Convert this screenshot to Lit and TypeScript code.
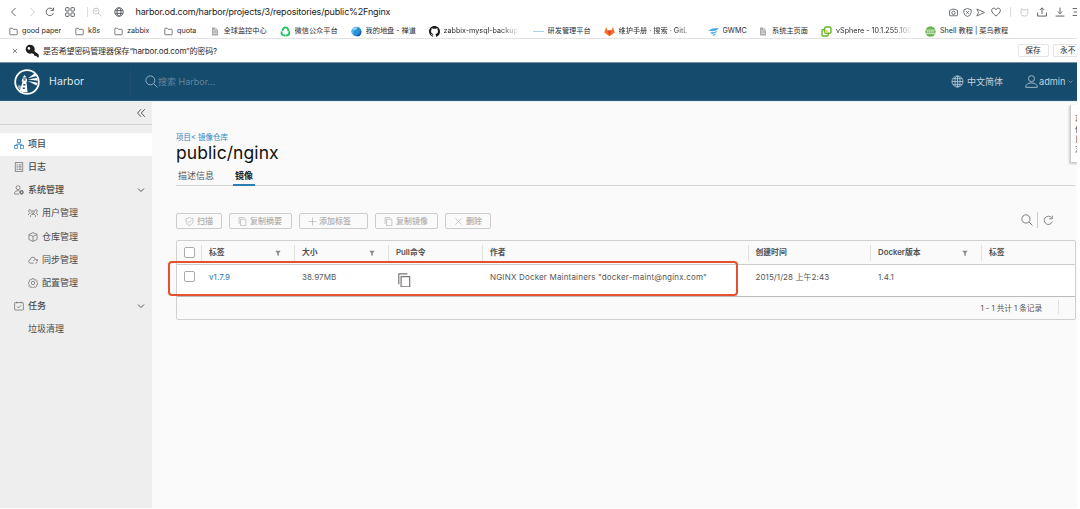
import { LitElement, html, css, svg, type TemplateResult } from "lit";
import { customElement } from "lit/decorators.js";
import { classMap } from "lit/directives/class-map.js";

type Shape = ReturnType<typeof svg>;

/* Line icons on a 16 x 16 grid. */
const shapes: Record<string, Shape> = {
  back: svg`<path d="M10.5 1.5 4 8l6.5 6.5"/>`,
  forward: svg`<path d="M5.500 1.500 12 8l-6.500 6.500"/>`,
  reload: svg`<path d="M13.600 9.500A6 6 0 1 1 12.500 4M13.500 1v4.500H9"/>`,
  grid: svg`<rect x="1" y="1" width="5.500" height="5.500" rx="1"/><rect x="9.500" y="1" width="5.500" height="5.500" rx="1"/><rect x="1" y="9.500" width="5.500" height="5.500" rx="1"/><rect x="9.500" y="9.500" width="5.500" height="5.500" rx="1"/>`,
  zoom: svg`<circle cx="6.500" cy="6.500" r="4.800"/><path d="M10 10l5 5M4 6.500h5"/>`,
  globe: svg`<circle cx="8" cy="8" r="6.800"/><ellipse cx="8" cy="8" rx="3.200" ry="6.800"/><path d="M1.200 8h13.600M2.300 4.500h11.400M2.300 11.500h11.400M8 1.200v13.600"/>`,
  web: svg`<circle cx="8" cy="8" r="6.800"/><ellipse cx="8" cy="8" rx="3.200" ry="6.800"/><path d="M1.800 5.800h12.400M1.800 10.200h12.400"/>`,
  folder: svg`<path d="M1.500 13V3q0-.8.8-.8h3.500l1.700 1.900h6.200q.8 0 .8.8V13q0 .8-.8.8H2.300q-.8 0-.8-.8z"/>`,
  camera: svg`<path d="M1 4.500q0-1 1-1h2L5 2.200h6l1 1.300h2q1 0 1 1v8.300q0 1-1 1H2q-1 0-1-1z"/><circle cx="8" cy="8.500" r="3"/>`,
  shieldx: svg`<path d="M8 .8l6.500 2.400v5q0 4.500-6.500 7-6.500-2.500-6.500-7v-5zM5.800 5.800l4.400 4.400M10.200 5.800l-4.400 4.400"/>`,
  send: svg`<path d="M1.500 1.800 15 8 1.500 14.200 4.500 8z"/>`,
  heart: svg`<path d="M8 14.500C4 11 1 8.600 1 5.400 1 1.500 6 .6 8 4.200 10 .6 15 1.500 15 5.400c0 3.200-3 5.600-7 9.100z"/>`,
  cat: svg`<path d="M2 1.500l3.500 2h5l3.500-2v8q0 5-6 5t-6-5zM5.500 7v1M10.500 7v1"/>`,
  upload: svg`<path d="M8 11V1.500M4.500 4.800 8 1.300l3.500 3.500M1 9v5.500h14V9"/>`,
  download: svg`<path d="M8 1v9.500M4.500 7.200 8 10.700l3.500-3.500M1 14.500h14"/>`,
  panel: svg`<path d="M1 2.500h14M3 8h12M1 13.500h14"/>`,
  close: svg`<path d="M2.500 2.500l11 11M13.500 2.500l-11 11"/>`,
  search: svg`<circle cx="6.600" cy="6.600" r="5.500"/><path d="M10.600 10.600 15.300 15.300"/>`,
  user: svg`<circle cx="8" cy="4.500" r="3.700"/><path d="M1 15.200v-2q1.500-3.500 7-3.500t7 3.500v2z"/>`,
  down: svg`<path d="M2 5l6 6 6-6"/>`,
  collapse: svg`<path d="M8 2 2.500 8 8 14M14 2 8.500 8l5.500 6"/>`,
  tree: svg`<rect x="5.500" y="1" width="5" height="5"/><rect x="1" y="10.500" width="4.500" height="4.500"/><rect x="10.500" y="10.500" width="4.500" height="4.500"/><path d="M8 6v2.500M3.200 10.500v-2h9.600v2"/>`,
  list: svg`<rect x="2" y="1" width="12" height="14"/><path d="M4.200 4.500h2M7.500 4.500h4.500M4.200 7h2M7.500 7h4.500M4.200 9.500h2M7.500 9.500h4.500M4.200 12h2M7.500 12h4.500"/>`,
  admin: svg`<circle cx="6.500" cy="4.300" r="3.200"/><path d="M8 14.500H1v-2.500q1.500-3 5.500-3 1 0 2 .4"/><circle cx="12" cy="11.500" r="2.300" stroke-width="2.400"/><path d="M12 7.700v1M12 14.300v1M8.200 11.500h1M14.800 11.500h1"/>`,
  users: svg`<circle cx="8" cy="6.500" r="2.200"/><path d="M4 14.500v-2.500q1.200-2 4-2t4 2v2.500M5 4.800A2 2 0 1 0 3 6.700M.8 11.500V9.800Q1.500 8.500 4 8.500M11 4.800a2 2 0 1 1 2 1.900M15.200 11.500V9.800Q14.500 8.500 12 8.500"/>`,
  cube: svg`<path d="M8 1l6.500 3v8L8 15l-6.500-3V4zM1.500 4 8 7l6.500-3M8 7v8"/>`,
  cloud: svg`<path d="M9 13H4Q1 13 1 10.400 1 8 3.500 7.700 4 3.500 8 3.500q3 0 4 2.800M8.500 9.500q1-2.300 3.500-2.300 2 0 3 1.500M15.500 6.500v2.700H13M15 11q-1 2-3.500 2"/>`,
  gear: svg`<path d="M6.700 1h2.600l.5 1.800 1.700.7 1.600-.9 1.600 1.800-.8 1.600.6 1.500 1 .5v2l-1.500.6-.7 1.700.6 1.200-1.700 1.500-1.500-.8-1.500.6-.6 1.200H6.700l-.6-1.300-1.600-.6-1.500.7-1.500-1.600.7-1.600-.7-1.500L.8 9V7l1.300-.7.6-1.600L2 3.500 3.800 2l1.400.8 1.200-.5z"/><circle cx="8" cy="8" r="2.700"/>`,
  task: svg`<rect x="1" y="2.500" width="14" height="12" rx="1"/><path d="M4.500 1v3M11.500 1v3M4.800 8.700l2.400 2.400 4.200-4.300"/>`,
  shieldok: svg`<path d="M8 .8q3 2 6.200 2v5.500q0 4-6.200 6.900-6.200-2.900-6.200-6.900V2.800q3.200 0 6.200-2zM5 7.800l2.300 2.300L11.200 6"/>`,
  copy: svg`<path d="M4.500 4h9.500v11.300H4.500zM2 12.500V1h9.500"/>`,
  plus: svg`<path d="M8 1v14M1 8h14"/>`,
};

const icon = (name: string, size = 10, extra = "") =>
  html`<svg class="ic ${extra}" viewBox="0 0 16 16" width=${size} height=${size}>${shapes[name]}</svg>`;

const page = html`<svg viewBox="0 0 16 16" width="8" height="9"><path fill="#aaa" d="M2 0h7l5 5v11H2z"/><path stroke="#fff" d="M4 6h4M4 9h8M4 12h8M9 0v5h5" fill="none"/></svg>`;
const wechat = html`<svg viewBox="0 0 16 16" width="11" height="11" fill="none" stroke="#20c45f" stroke-width="2.800" stroke-linecap="round"><path d="M4 6Q5 2 8 2t4.200 4"/><path d="M13.300 8.500q1.200 5-4 5.200"/><path d="M6.500 13.700Q1.500 13.300 2.300 9"/></svg>`;
const zen = html`<svg viewBox="0 0 16 16" width="11" height="11"><circle cx="8" cy="8" r="7" fill="#288fd8"/><path fill="#8bd0f2" d="M2 4q4-4 8-2-2 4-7 5z"/><path fill="#1261ab" d="M7 14q7-2 7-9 3 5-1 9-3 2-6 0z"/><path fill="#55b5e9" d="M0 6h4v5H1z"/></svg>`;
const github = html`<svg viewBox="0 0 16 16" width="11" height="11"><path fill="#191717" d="M8 0C3.580 0 0 3.580 0 8c0 3.540 2.290 6.530 5.470 7.590.4.070.55-.17.55-.38 0-.19-.01-.82-.01-1.490-2.010.37-2.530-.49-2.690-.94-.09-.23-.48-.94-.82-1.130-.28-.15-.68-.52-.01-.53.63-.01 1.080.58 1.230.82.72 1.210 1.870.87 2.330.66.070-.52.280-.87.510-1.070-1.780-.2-3.640-.89-3.640-3.950 0-.87.31-1.590.82-2.150-.08-.2-.36-1.020.08-2.120 0 0 .67-.21 2.200.82a7.400 7.400 0 0 1 4 0c1.530-1.040 2.200-.82 2.200-.82.44 1.100.16 1.920.08 2.120.51.56.82 1.270.82 2.150 0 3.070-1.870 3.750-3.650 3.950.29.25.54.73.54 1.480 0 1.070-.01 1.930-.01 2.200 0 .21.15.46.55.38A8 8 0 0 0 16 8c0-4.420-3.580-8-8-8z"/></svg>`;
const dash = html`<svg viewBox="0 0 11 11" width="11" height="11"><path d="M0 5.500h11" stroke="#a6d2e4"/></svg>`;
const gitlab = html`<svg viewBox="0 0 16 16" width="11" height="11"><path fill="#fc6d26" d="M8 15 .4 9.400 3 1.500 5.300 6.500h5.400L13 1.500l2.600 7.900z"/><path fill="#e24329" d="M8 15 5.300 6.500h5.400z"/></svg>`;
const wing = html`<svg viewBox="0 0 16 16" width="11" height="11"><path fill="#4aa8e2" d="M0 6.500Q6 3 15.500 3q-2 4-9 4.500zM3 9.500q7 0 10.500-2.500-2 4-8 4.500zM6 13q4-.5 6-2.500-1 3-4 3.500z"/></svg>`;
const vsphere = html`<svg viewBox="0 0 16 16" width="11" height="11" fill="none" stroke-width="2"><rect x="5.500" y="1.500" width="9" height="9" rx="1.500" stroke="#6ab52c"/><path stroke="#6ab52c" d="M5 5.500H2.500q-1 0-1 1v7q0 1 1 1h7q1 0 1-1V11"/><rect x="6" y="6" width="4" height="4" fill="#d8dd4a"/></svg>`;
const shell = html`<svg viewBox="0 0 16 16" width="11" height="11"><circle cx="8" cy="8" r="7.500" fill="#6cb356"/><path stroke="#fff" d="M1 6h14M1 11h14" fill="none"/><path stroke="#e4f3dc" stroke-width="1.600" d="M3 8.500h10" stroke-dasharray="2 1"/></svg>`;

interface Bookmark { label: string; icon: TemplateResult; cls: string; }
const bookmarks: Bookmark[] = [
  { label: "good paper", icon: icon("folder", 9), cls: "b1" },
  { label: "k8s", icon: icon("folder", 9), cls: "b2" },
  { label: "zabbix", icon: icon("folder", 9), cls: "b3" },
  { label: "quota", icon: icon("folder", 9), cls: "b4" },
  { label: "全球监控中心", icon: page, cls: "b5" },
  { label: "微信公众平台", icon: wechat, cls: "b6" },
  { label: "我的地盘 - 禅道", icon: zen, cls: "b7" },
  { label: "zabbix-mysql-backup/", icon: github, cls: "b8 fade" },
  { label: "研发管理平台", icon: dash, cls: "b9" },
  { label: "维护手册 · 搜索 · GitL", icon: gitlab, cls: "b10 fade" },
  { label: "GWMC", icon: wing, cls: "b11" },
  { label: "系统主页面", icon: page, cls: "b12" },
  { label: "vSphere - 10.1.255.100", icon: vsphere, cls: "b13 fade" },
  { label: "Shell 教程 | 菜鸟教程", icon: shell, cls: "b14" },
];

interface NavItem { label: string; icon?: string; level: number; active?: boolean; open?: boolean; }
const nav: NavItem[] = [
  { label: "项目", icon: "tree", level: 0, active: true },
  { label: "日志", icon: "list", level: 0 },
  { label: "系统管理", icon: "admin", level: 0, open: true },
  { label: "用户管理", icon: "users", level: 1 },
  { label: "仓库管理", icon: "cube", level: 1 },
  { label: "同步管理", icon: "cloud", level: 1 },
  { label: "配置管理", icon: "gear", level: 1 },
  { label: "任务", icon: "task", level: 0, open: true },
  { label: "垃圾清理", level: 1 },
];

const actions = [
  { label: "扫描", icon: "shieldok", cls: "w46" },
  { label: "复制摘要", icon: "copy", cls: "w63" },
  { label: "添加标签", icon: "plus", cls: "w69" },
  { label: "复制镜像", icon: "copy", cls: "w63" },
  { label: "删除", icon: "close", cls: "w46" },
];

const columns = [
  { label: "标签", filter: true },
  { label: "大小", filter: true },
  { label: "Pull命令" },
  { label: "作者" },
  { label: "创建时间" },
  { label: "Docker版本", filter: true },
  { label: "标签" },
];

@customElement("browser-chrome")
export class BrowserChrome extends LitElement {
  static styles = css`
    :host { display: block; height: 62px; background: #fff; color: #2b2b2d; font-family: Inter, "Noto Sans CJK SC", sans-serif; }
    svg { display: block; flex: none; }
    .ic { fill: none; stroke: currentColor; stroke-width: 1.500; }
    .bar { display: flex; align-items: center; height: 24px; padding-left: 8.500px; color: #555a60; box-sizing: border-box; }
    .bar .pale { color: #c4c4c4; }
    .g8 { margin-left: 8px; } .g11 { margin-left: 10.500px; } .g12 { margin-left: 11.500px; }
    .sep { width: 1px; height: 10px; background: #ddd; margin-left: 12px; flex: none; }
    .zm { margin-left: 4px; }
    .url { color: #202124; font-size: 9px; margin-left: 12px; line-height: 12px; flex: 1; letter-spacing: -0.170px; white-space: nowrap; }
    .tools { display: flex; align-items: center; width: 128px; overflow: hidden; flex: none; }
    .t4 { margin-left: 4.500px; } .t5 { margin-left: 5.500px; } .t8 { margin-left: 8px; } .t9 { margin-left: 9px; }
    .t7 { margin-left: 7.500px; }
    .tools .sep { margin-left: 9px; }
    .marks { display: flex; align-items: center; height: 14px; border-bottom: 1px solid #e3e3e3; font-size: 7.200px; padding-left: 9px; }
    .marks .ic { color: #666; }
    .mark { display: flex; align-items: center; flex: none; }
    .mark span { margin-left: 4px; white-space: nowrap; overflow: hidden; line-height: 12px; }
    .fade span { mask-image: linear-gradient(90deg, #000 75%, transparent); }
    .b1 { width: 66px; } .b2 { width: 39px; } .b3 { width: 50px; } .b4 { width: 46.500px; }
    .b5 { width: 69px; } .b6 { width: 71px; } .b7 { width: 78px; } .b8 { width: 104px; }
    .b5 span, .b12 span { margin-left: 5px; }
    .b8 span { width: 76px; }
    .b9 { width: 71px; } .b10 { width: 104px; } .b10 span { width: 77px; }
    .b11 { width: 51.500px; } .b12 { width: 62px; } .b13 { width: 104px; } .b13 span { width: 77px; }
    .save { display: flex; align-items: center; height: 23px; padding-left: 12px; font-size: 8px; }
    .save .key { margin-left: 7px; }
    .save .q { flex: 1; margin-left: 4px; line-height: 12px; letter-spacing: -0.140px; }
    .btn { border: 1px solid #e4e4e4; border-radius: 2px; box-sizing: border-box; height: 13px; width: 31px; line-height: 11px; text-align: center; font-size: 7.700px; flex: none; }
    .cut { width: 24.500px; border-right: 0; border-radius: 2px 0 0 2px; margin-left: 4px; padding-left: 6.500px; text-align: left; overflow: hidden; white-space: nowrap; }
  `;
  render() {
    return html`
      <div class="bar">
        ${icon("back", 10)}${icon("forward", 10, "pale g8")}${icon("reload", 10, "g8")}${icon("grid", 10, "g11")}
        <i class="sep"></i>${icon("zoom", 10, "pale zm")}${icon("web", 10, "g12")}
        <span class="url">harbor.od.com/harbor/projects/3/repositories/public%2Fnginx</span>
        <div class="tools">
          ${icon("camera", 9)}${icon("shieldx", 9, "t4")}${icon("send", 9, "t4")}${icon("heart", 10, "t5")}
          <i class="sep"></i>${icon("cat", 9, "pale t9")}${icon("upload", 10, "t8")}${icon("download", 10, "t8")}${icon("panel", 10, "t7")}
        </div>
      </div>
      <div class="marks">${bookmarks.map((b) => html`<div class="mark ${b.cls}">${b.icon}<span>${b.label}</span></div>`)}</div>
      <div class="save">
        ${icon("close", 6)}
        <svg class="key" viewBox="0 0 16 16" width="14" height="14"><path fill="#1d1e20" fill-rule="evenodd" d="M6 1a5 5 0 1 0 1.500 9.700L10 11.500l.8 2 2.200.3 1.300 1.500 1.500-.4-.2-2.800-5-4A5 5 0 0 0 6 1zm-1.500 2.500a1.500 1.500 0 1 1 0 3 1.500 1.500 0 0 1 0-3z"/></svg>
        <span class="q">是否希望密码管理器保存“harbor.od.com”的密码?</span>
        <span class="btn">保存</span><span class="btn cut">永不</span>
      </div>`;
  }
}

@customElement("app-root")
export class AppRoot extends LitElement {
  static styles = css`
    :host { display: block; width: 1080px; height: 509px; overflow: hidden; background: #fff; font-family: Inter, "Noto Sans CJK SC", sans-serif; color: #565656; }
    * { box-sizing: border-box; }
    svg { display: block; flex: none; }
    .ic { fill: none; stroke: currentColor; stroke-width: 1.150; }
    .screen { width: 1077px; height: 508px; background: #fafafa; display: flex; flex-direction: column; overflow: hidden; position: relative; }
    .top { height: 39px; background: #154b6d; border-top: 1px solid #7b929e; display: flex; align-items: center; color: #c5d3dc; flex: none; border-bottom: 1px solid #2e5d7c; }
    .logo { margin-left: 13.500px; }
    .brand { margin-left: 9.500px; font-size: 10.500px; width: 81px; color: #dfe7ec; letter-spacing: 0.100px; }
    .find { border-left: 1px solid #244f6e; height: 26px; padding-left: 14px; display: flex; align-items: center; flex: 1; font-size: 9px; color: #5f86a0; }
    .find .ic { color: #9bb3c3; }
    .lang { display: flex; align-items: center; gap: 3px; font-size: 9px; width: 74px; }
    .lang .ic, .me .ic { color: #a9bfcc; }
    .me { display: flex; align-items: center; gap: 1px; font-size: 9.200px; width: 52px; }
    .me .ic:last-child { margin-left: 1px; stroke-width: 2; }
    .body { display: flex; flex: 1; min-height: 0; border-top: 1px solid #e4eff5; }
    .side { width: 152px; background: #eee; flex: none; }
    .fold { height: 23px; border-bottom: 1px solid #d2d2d2; display: flex; align-items: center; justify-content: flex-end; padding-right: 6px; margin-bottom: 7.600px; }
    .fold .ic { stroke-width: 1.600; }
    .item { height: 23.100px; display: flex; align-items: center; padding: 0 7px 0 14px; font-size: 9px; color: #4a4a4a; }
    .item .label { flex: 1; margin-left: 4px; line-height: 12px; font-weight: 500; }
    .item .ic { color: #777; stroke-width: 1.300; }
    .item .ic:last-child { color: #555; stroke-width: 2; }
    .item.active { background: #fff; }
    .item.active .ic { color: #3b8fc6; }
    .item.sub { padding-left: 28px; }
    .item.sub .label { font-weight: 400; }
    .item.bare .label { margin-left: 0; }
    main { flex: 1; min-width: 0; padding: 29px 0 0 24px; }
    .crumb { font-size: 7.500px; line-height: 12px; height: 12px; color: #2f86bd; letter-spacing: -0.020px; padding-top: 1px; }
    h1 { margin: 0; font-size: 17.500px; line-height: 20px; font-weight: 400; color: #111; letter-spacing: 0.080px; }
    .tabs { display: flex; height: 23px; border-bottom: 1px solid #d4d4d4; font-size: 9px; line-height: 12px; width: 899px; }
    .tab { height: 23px; padding: 7px 2px 0; }
    .tab.on { margin-left: 17px; color: #222; font-weight: 600; border-bottom: 2px solid #2b7fb5; }
    .acts { display: flex; align-items: center; gap: 7px; height: 16px; margin-top: 27px; }
    .act { display: flex; align-items: center; height: 16px; border: 1px solid #cdcdcd; border-radius: 2px; color: #adadad; font-size: 8px; padding-left: 8px; gap: 3px; flex: none; font-weight: 500; }
    .act span { line-height: 12px; }
    .w46 { width: 46px; } .w63 { width: 63px; } .w69 { width: 69px; gap: 2px; }
    .right { margin-left: auto; display: flex; align-items: center; padding: 0 23px 2px 0; color: #666; }
    .right i { width: 1px; height: 16px; background: #ccc; margin: 0 5px 0 4px; }
    .grid { margin-top: 11px; border: 1px solid #d0d0d0; border-radius: 2px; width: 900px; height: 80px; font-size: 8px; position: relative; }
    .row { display: grid; grid-template-columns: 24px 93px 94px 94px 265.500px 122.500px 111px 1fr; }
    .head { height: 24px; align-items: center; border-bottom: 1px solid #ccc; font-weight: 600; color: #505050; font-size: 7.800px; }
    .head .cell { border-left: 1px solid #e2e2e2; height: 16px; line-height: 15px; padding: 0 13.500px 0 7px; display: flex; justify-content: space-between; align-items: center; }
    .data { height: 32px; background: #fff; border-bottom: 1px solid #bbb; padding-top: 6px; line-height: 12px; letter-spacing: 0.080px; }
    .data .cell { padding-left: 8px; white-space: nowrap; margin-top: -0.500px; }
    .data .copy { padding-top: 2px; padding-left: 9px; color: #777; }
    .data .copy .ic { stroke-width: 1.300; }
    .link { color: #2379ad; }
    .data .author { letter-spacing: 0.180px; }
    .box { width: 10.500px; height: 10.500px; border: 1px solid #aaa; border-radius: 2px; margin-left: 7px; background: #fff; }
    .foot { height: 22px; display: flex; align-items: center; justify-content: flex-end; font-size: 7.600px; padding-bottom: 2px; }
    .foot i { width: 17px; height: 14px; border-left: 1px solid #e0e0e0; margin-left: 16px; }
    .ring { position: absolute; left: -9px; top: 20px; width: 570px; height: 35px; border: 2px solid #e5502f; border-radius: 4px; }
    .log { position: absolute; left: 1070px; top: 105px; width: 12px; height: 58px; background: #fff; border-left: 1px solid #ccc; border-bottom: 1px solid #ccc; box-shadow: -1px 1px 2px #ccc; padding: 9px 0 0 4px; font-size: 8px; line-height: 10px; color: #333; }
    .log span { display: block; width: 8px; }
  `;
  render() {
    return html`<div class="screen">
      <browser-chrome></browser-chrome>
      <header class="top">
        <svg class="logo" viewBox="0 0 26 26" width="26" height="26">
          <circle cx="13" cy="13" r="11.800" fill="none" stroke="#fff" stroke-width="1.800"/>
          <path fill="#fff" d="M8.200 9.500h4.600l.4 3h-.8l1.200 11-5-.5-2.800-1.300L8.600 12.500h-.9zM8.600 8.600 10.500 6l1.900 2.600z"/>
          <path fill="#154b6d" d="M9.500 10.300h2v1.300h-2zM9.300 15h2v1.500h-2zM8.800 18.500h2V20h-2z"/>
          <path fill="#fff" d="M14 9.200 20.500 4.500l2 2.600zM14 10.500l9.300-1.800.6 3zM14 12l9.500 1.800-1 2.800z"/>
          <path fill="#fff" d="M3.500 17q2-1.500 3.500 0l-.5 4-2-1.500z" opacity=".55"/>
        </svg>
        <span class="brand">Harbor</span>
        <div class="find">${icon("search", 13)}<span>搜索 Harbor...</span></div>
        <div class="lang">${icon("globe", 13)}<span>中文简体</span></div>
        <div class="me">${icon("user", 13)}<span>admin</span>${icon("down", 5)}</div>
      </header>
      <div class="body">
        <aside class="side">
          <div class="fold">${icon("collapse", 10)}</div>
          ${nav.map((n) => html`<div class=${classMap({ item: true, active: !!n.active, sub: n.level === 1, bare: !n.icon })}>
            ${n.icon ? icon(n.icon, 10) : ""}<span class="label">${n.label}</span>${n.open ? icon("down", 8) : ""}
          </div>`)}
        </aside>
        <main>
          <div class="crumb">项目&lt; 镜像仓库</div>
          <h1>public/nginx</h1>
          <div class="tabs"><span class="tab">描述信息</span><span class="tab on">镜像</span></div>
          <div class="acts">
            ${actions.map((a) => html`<div class="act ${a.cls}">${icon(a.icon, 9)}<span>${a.label}</span></div>`)}
            <div class="right">${icon("search", 12)}<i></i>${icon("reload", 11)}</div>
          </div>
          <div class="grid">
            <div class="row head"><div class="box"></div>
              ${columns.map((c) => html`<div class="cell"><span>${c.label}</span>${c.filter
                ? html`<svg viewBox="0 0 8 8" width="6" height="6"><path fill="#888" d="M.5 1h7L5 4.300V8L3 7V4.300z"/></svg>` : ""}</div>`)}
            </div>
            <div class="row data"><div class="box"></div>
              <div class="cell link">v1.7.9</div><div class="cell">38.97MB</div>
              <div class="cell copy">${icon("copy", 14.5)}</div>
              <div class="cell author">NGINX Docker Maintainers "docker-maint@nginx.com"</div>
              <div class="cell">2015/1/28 上午2:43</div><div class="cell">1.4.1</div><div class="cell"></div>
            </div>
            <div class="foot"><span>1 - 1 共计 1 条记录</span><i></i></div>
            <div class="ring"></div>
          </div>
        </main>
      </div>
      <div class="log"><span>事</span><span>件</span><span>日</span><span>志</span></div>
    </div>`;
  }
}
